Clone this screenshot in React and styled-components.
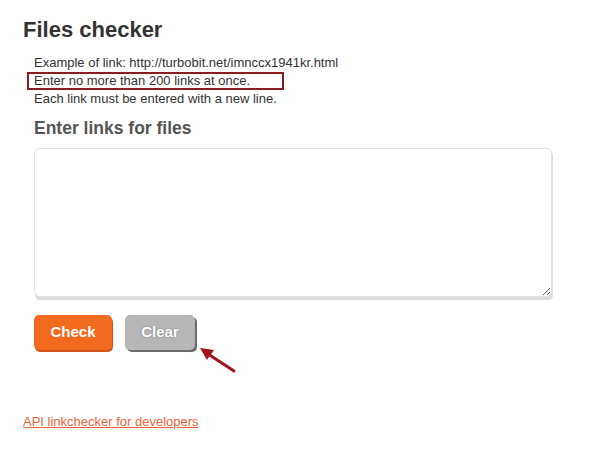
import React from "react";
import styled, { createGlobalStyle } from "styled-components";

const Global = createGlobalStyle`
  html, body { margin: 0; padding: 0; background: #fff; }
  body { font-family: "Liberation Sans", Arial, sans-serif; color: #333; }
`;

const Page = styled.div`
  width: 597px;
  height: 462px;
  padding: 16px 0 0 23px;
  box-sizing: border-box;
  position: relative;
`;

const Title = styled.h1`
  margin: 0;
  font-size: 22px;
  line-height: 28px;
  font-weight: bold;
  color: #333;
`;

const Notes = styled.div`
  margin: 10px 0 0 4px;
  font-size: 13px;
  line-height: 18px;
  color: #333;
`;

const Note = styled.div`
  padding-left: 5px;
  width: ${(p) => (p.$boxed ? "257px" : "auto")};
  height: 18px;
  box-sizing: border-box;
  white-space: nowrap;
  border: 2px solid ${(p) => (p.$boxed ? "#8e1b1f" : "transparent")};
  line-height: 14px;
`;

const Form = styled.div`
  margin-left: 11px;
`;

const SubTitle = styled.h2`
  margin: 9px 0 0;
  font-size: 17.5px;
  line-height: 22px;
  font-weight: bold;
  color: #555;
`;

const TextArea = styled.textarea`
  display: block;
  margin-top: 9px;
  width: 518px;
  height: 149px;
  box-sizing: border-box;
  border: 1px solid #e2e2e2;
  border-radius: 5px;
  box-shadow: 1px 3px 0 #dcdcdc;
  background: #fff;
  resize: both;
  outline: none;
`;

const Buttons = styled.div`
  display: flex;
  gap: 13px;
  margin-top: 18px;
`;

const Button = styled.button`
  height: 35px;
  width: ${(p) => p.$w}px;
  border: none;
  border-radius: 5px;
  padding: 0 0 2px;
  font-family: "Liberation Sans", Arial, sans-serif;
  font-size: 15px;
  font-weight: bold;
  color: #fff;
  background: ${(p) => (p.$gray ? "#b7b7b7" : "#f26a1d")};
  box-shadow: ${(p) => (p.$gray ? "2px 2px 0 #6a6a6a" : "1px 2px 0 #d2541b")};
  text-shadow: ${(p) => (p.$gray ? "0 0 2px #777" : "none")};
  cursor: pointer;
`;

const Arrow = styled.svg`
  position: absolute;
  left: 196px;
  top: 344px;
`;

const ApiLink = styled.a`
  display: inline-block;
  margin-top: 64px;
  font-size: 13px;
  color: #e8643a;
  text-decoration: underline;
`;

export default function App() {
  return (
    <Page>
      <Global />
      <Title>Files checker</Title>
      <Notes>
        <Note>Example of link: http://turbobit.net/imnccx1941kr.html</Note>
        <Note $boxed>Enter no more than 200 links at once.</Note>
        <Note>Each link must be entered with a new line.</Note>
      </Notes>
      <Form>
        <SubTitle>Enter links for files</SubTitle>
        <TextArea />
        <Buttons>
          <Button $w={78}>Check</Button>
          <Button $w={70} $gray>Clear</Button>
        </Buttons>
      </Form>
      <ApiLink href="#">API linkchecker for developers</ApiLink>
      <Arrow width="42" height="32" viewBox="0 0 42 32">
        <line x1="38" y1="27" x2="12" y2="10" stroke="#a0141c" strokeWidth="3" strokeLinecap="round" />
        <polygon points="4,4 18,6 11,16" fill="#a0141c" />
      </Arrow>
    </Page>
  );
}
